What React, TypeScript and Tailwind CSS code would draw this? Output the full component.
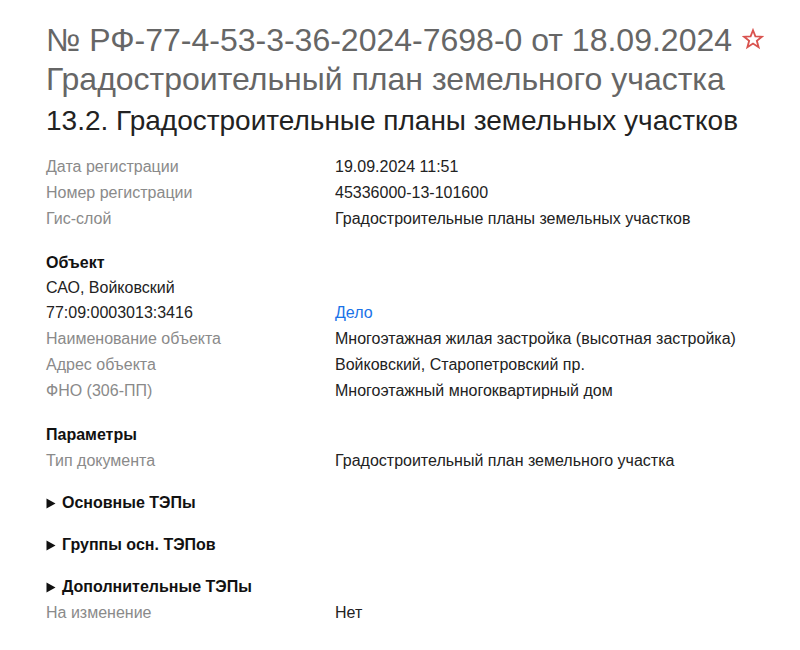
import React from "react";

const Row = ({
  label,
  value,
  labelClass = "text-[#8a8a8a]",
  valueClass = "text-[#222]",
}: {
  label: string;
  value: string;
  labelClass?: string;
  valueClass?: string;
}) => (
  <div className="flex h-[26px] items-center">
    <div className={`w-[289px] shrink-0 ${labelClass}`}>{label}</div>
    <div className={valueClass}>{value}</div>
  </div>
);

const Head = ({ children }: { children: React.ReactNode }) => (
  <div className="flex h-[26px] items-center font-bold text-[#111]">{children}</div>
);

const Summary = ({ children }: { children: React.ReactNode }) => (
  <div className="mt-[16px] flex h-[26px] items-center gap-[6px] font-bold text-[#111]">
    <svg width="10" height="11" viewBox="0 0 10 11" className="shrink-0">
      <path d="M0.5 0.5 L9.5 5.5 L0.5 10.5 Z" fill="#111" />
    </svg>
    <span>{children}</span>
  </div>
);

export default function App() {
  return (
    <div
      className="min-h-[650px] w-[800px] bg-white pl-[46px] pt-[20px] text-[16px]"
      style={{ fontFamily: '"Liberation Sans", Arial, sans-serif' }}
    >
      <div className="flex h-[39px] items-center text-[32px] text-[#666]">
        <span>№ РФ-77-4-53-3-36-2024-7698-0 от 18.09.2024</span>
        <svg width="22" height="22" viewBox="0 0 24 24" className="ml-[10px] mt-[-2px]">
          <path
            d="M12 2.5 L14.6 9.2 L21.7 9.5 L16.2 14 L18.1 21 L12 17 L5.9 21 L7.8 14 L2.3 9.5 L9.4 9.2 Z"
            fill="none"
            stroke="#d9534f"
            strokeWidth="2"
            strokeLinejoin="miter"
          />
        </svg>
      </div>
      <div className="flex h-[39px] items-center text-[32px] text-[#666]">
        Градостроительный план земельного участка
      </div>
      <div className="flex h-[46px] items-center text-[28px] text-[#222]">
        13.2. Градостроительные планы земельных участков
      </div>
      <div className="mt-[10px]">
        <Row label="Дата регистрации" value="19.09.2024 11:51" />
        <Row label="Номер регистрации" value="45336000-13-101600" />
        <Row label="Гис-слой" value="Градостроительные планы земельных участков" />
      </div>
      <div className="mt-[18px]">
        <Head>Объект</Head>
        <div className="flex h-[24px] items-center text-[#222]">САО, Войковский</div>
        <Row
          label="77:09:0003013:3416"
          value="Дело"
          labelClass="text-[#222]"
          valueClass="text-[#1a73e8]"
        />
        <Row label="Наименование объекта" value="Многоэтажная жилая застройка (высотная застройка)" />
        <Row label="Адрес объекта" value="Войковский, Старопетровский пр." />
        <Row label="ФНО (306-ПП)" value="Многоэтажный многоквартирный дом" />
      </div>
      <div className="mt-[18px]">
        <Head>Параметры</Head>
        <Row label="Тип документа" value="Градостроительный план земельного участка" />
      </div>
      <div>
        <Summary>Основные ТЭПы</Summary>
        <Summary>Группы осн. ТЭПов</Summary>
        <Summary>Дополнительные ТЭПы</Summary>
        <Row label="На изменение" value="Нет" />
      </div>
    </div>
  );
}
